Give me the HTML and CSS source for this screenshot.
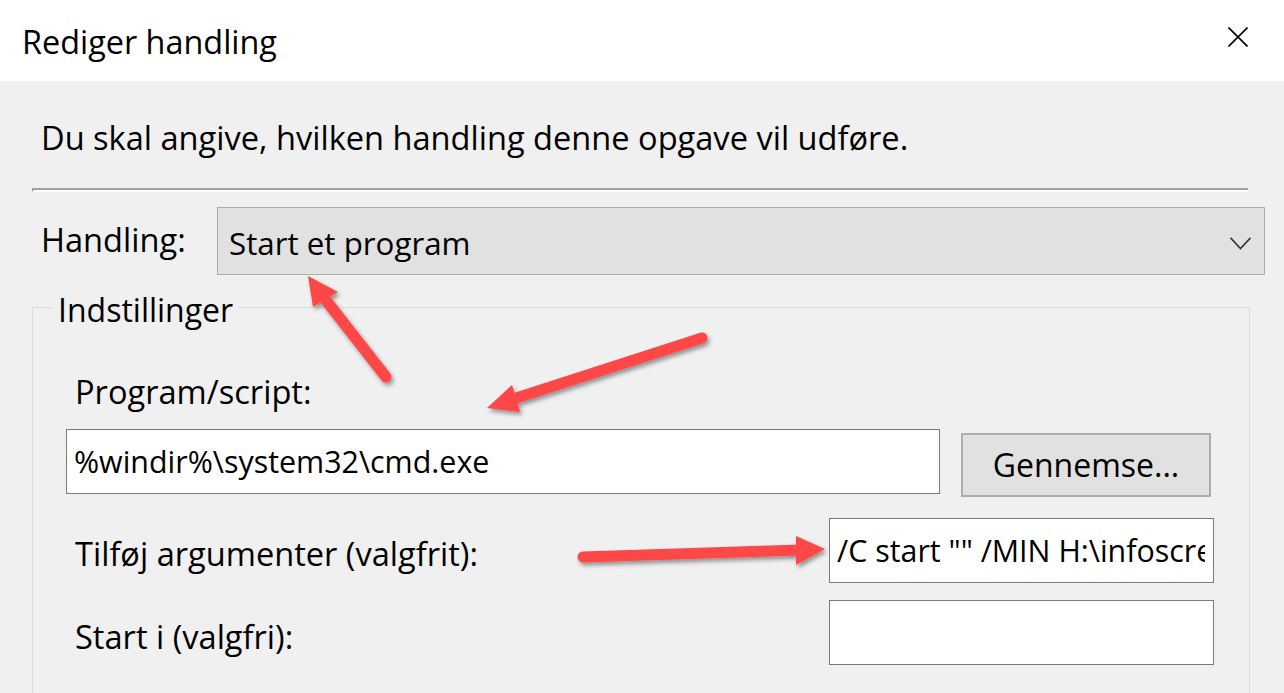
FILE: index.html
```html
<!DOCTYPE html>
<html lang="da">
<head>
<meta charset="utf-8">
<title>Rediger handling</title>
<link rel="stylesheet" href="styles.css">
</head>
<body>
<header class="titlebar">
  <span class="title">Rediger handling</span>
  <svg class="close" width="20" height="20" viewBox="0 0 20 20"><path d="M0.5 0.5 L19.5 19.5 M19.5 0.5 L0.5 19.5" stroke="#000" stroke-width="1.6" fill="none"/></svg>
</header>
<main class="content">
  <p class="intro">Du skal angive, hvilken handling denne opgave vil udføre.</p>
  <div class="sep"></div>
  <div class="action-row">
    <span class="action-label">Handling:</span>
    <div class="combo">
      <span class="combo-text">Start et program</span>
      <svg class="chevron" width="21" height="13" viewBox="0 0 21 13"><polyline points="0.5,0.8 10.5,11.5 20.5,0.8" stroke="#333" stroke-width="1.6" fill="none"/></svg>
    </div>
  </div>
  <section class="group">
    <div class="legend">Indstillinger</div>
    <div class="group-body">
      <div class="field-label">Program/script:</div>
      <div class="prog-row">
        <div class="input wide"><span>%windir%\system32\cmd.exe</span></div>
        <button class="btn" type="button">Gennemse...</button>
      </div>
      <div class="arg-row">
        <span class="arg-label">Tilføj argumenter (valgfrit):</span>
        <div class="input small"><span class="clip">/C start "" /MIN H:\infoscreen\infoscreen.bat</span></div>
      </div>
      <div class="arg-row start-row">
        <span class="arg-label start-label">Start i (valgfri):</span>
        <div class="input small"><span></span></div>
      </div>
    </div>
  </section>
</main>
<svg class="arrows" width="1284" height="693" viewBox="0 0 1284 693">
  <defs>
    <filter id="sh" x="-20%" y="-20%" width="140%" height="140%">
      <feDropShadow dx="2" dy="3" stdDeviation="2" flood-color="#000" flood-opacity="0.4"/>
    </filter>
  </defs>
  <g filter="url(#sh)" fill="#fe4646" stroke="#fe4646">
    <line x1="386" y1="377" x2="321" y2="294" stroke-width="11" stroke-linecap="round"/>
    <polygon points="308,276 338,292 313,307" stroke="none"/>
    <line x1="702" y1="338" x2="510" y2="400" stroke-width="11" stroke-linecap="round"/>
    <polygon points="487,408 512,385 520,412" stroke="none"/>
    <line x1="583" y1="557" x2="802" y2="550" stroke-width="11" stroke-linecap="round"/>
    <polygon points="825,549 796,536 796,565" stroke="none"/>
  </g>
</svg>
</body>
</html>
```
FILE: styles.css
```css
* { box-sizing: border-box; }
html, body { margin: 0; padding: 0; }
body {
  width: 1284px;
  height: 693px;
  overflow: hidden;
  position: relative;
  background: #f0f0f0;
  font-family: "Open Sans", "Noto Sans", sans-serif;
  font-size: 32.6px;
  line-height: 40px;
  color: #000;
}
.titlebar {
  height: 81px;
  background: #fff;
  display: flex;
  align-items: center;
  justify-content: space-between;
  padding: 0 36px 0 22px;
}
.title { font-size: 32.4px; }
.close { margin-bottom: 8px; }
.content { padding: 37px 19px 0 32px; }
.intro { margin: 0 0 0 9px; }
.sep {
  margin-top: 30px;
  width: 1216px;
  height: 4px;
  border-top: 2px solid #a0a0a0;
  border-bottom: 2px solid #fff;
  border-left: 2px solid #a0a0a0;
}
.action-row { display: flex; margin-top: 15px; padding-left: 9px; }
.action-label { width: 176px; flex: none; margin-top: 13px; }
.combo {
  flex: 1;
  height: 68px;
  border: 1px solid #adadad;
  background: #e1e1e1;
  padding: 15px 13px 11px 11px;
  display: flex;
  justify-content: space-between;
  align-items: flex-start;
  font-size: 31.3px;
}
.chevron { margin-top: 14px; }
.group {
  margin-top: 32px;
  width: 1218px;
  height: 600px;
  border: 1px solid #dcdcdc;
  border-bottom: none;
}
.legend {
  margin: -18px 0 0 20px;
  padding: 0 5px;
  width: fit-content;
  background: #f0f0f0;
  font-size: 32px;
}
.group-body { padding-left: 33px; }
.field-label { margin: 42px 0 0 9px; }
.prog-row { display: flex; gap: 21px; margin-top: 17px; align-items: flex-start; }
.input {
  border: 1px solid #7a7a7a;
  background: #fff;
  height: 65px;
  padding: 12px 8px 11px 7px;
  white-space: nowrap;
  font-size: 30.4px;
}
.input > span { display: block; height: 40px; }
.input > .clip { overflow: hidden; }
.input.wide { width: 874px; }
.input.small { width: 385px; flex: none; }
.btn {
  width: 250px;
  height: 64px;
  margin-top: 4px;
  border: 2px solid #adadad;
  background: #e1e1e1;
  font: inherit;
  font-size: 32px;
  line-height: 40px;
  color: #000;
  padding: 0;
}
.arg-row { display: flex; margin-top: 21px; align-items: flex-start; }
.start-row { margin-top: 17px; }
.arg-label { width: 763px; flex: none; padding-left: 9px; margin-top: 16px; }
.start-label { margin-top: 17px; }
.arrows { position: absolute; left: 0; top: 0; pointer-events: none; }
```
